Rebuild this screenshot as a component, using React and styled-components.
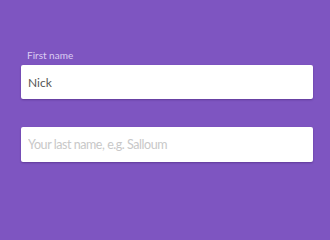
import styled, { createGlobalStyle } from "styled-components";

const GlobalStyle = createGlobalStyle`
  html, body {
    margin: 0;
    padding: 0;
    background: #7e55c1;
  }
  * { box-sizing: border-box; }
`;

const Page = styled.div`
  width: 330px;
  height: 201px;
  background: #7e55c1;
  padding: 48px 17px 0 21px;
  font-family: Lato, "Open Sans", sans-serif;
  display: flex;
  flex-direction: column;
  gap: 28px;
`;

const Field = styled.label`
  display: flex;
  flex-direction: column;
  gap: 3px;
`;

const Label = styled.span`
  padding-left: 6px;
  font-size: 10px;
  line-height: 14px;
  color: #dccdf3;
`;

const Input = styled.input`
  width: 100%;
  height: ${({ $h }) => $h}px;
  border: none;
  border-radius: 2px;
  background: #fff;
  padding: 0 6px 0 7px;
  font-family: inherit;
  font-size: 12px;
  color: #555;
  box-shadow: 0 1px 2px rgba(40, 10, 80, 0.35);
  outline: none;

  &::placeholder {
    color: #c8c8c8;
    font-size: 12.5px;
    letter-spacing: -0.45px;
  }
`;

function App() {
  return (
    <>
      <GlobalStyle />
      <Page>
        <Field>
          <Label>First name</Label>
          <Input $h={34} defaultValue="Nick" />
        </Field>
        <Field>
          <Input $h={35} placeholder="Your last name, e.g. Salloum" />
        </Field>
      </Page>
    </>
  );
}

export default App;
